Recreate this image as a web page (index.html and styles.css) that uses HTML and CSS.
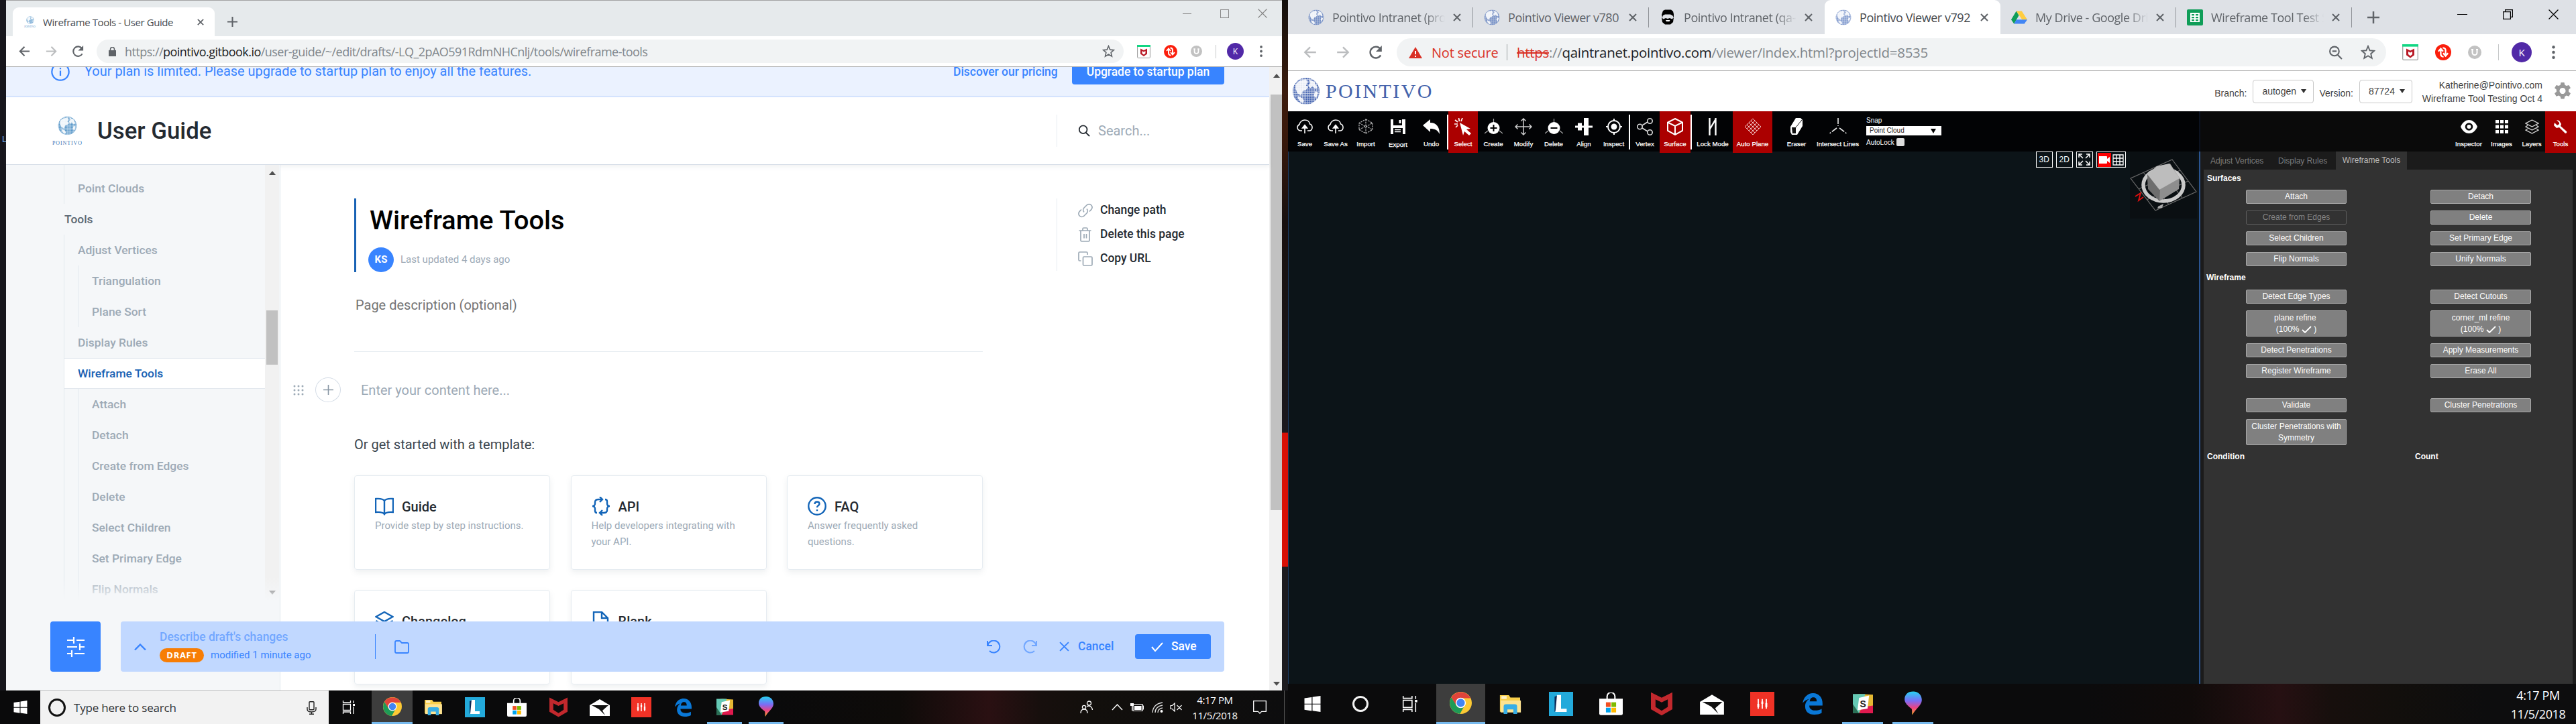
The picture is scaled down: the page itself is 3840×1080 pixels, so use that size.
FILE: index.html
```html
<!DOCTYPE html>
<html lang="en">
<head>
<meta charset="utf-8">
<title>Wireframe Tools - User Guide</title>
<link rel="stylesheet" href="styles.css">
</head>
<body>
<svg class="defs" aria-hidden="true">
  <defs>
    <clipPath id="disc"><circle cx="20" cy="20" r="19"/></clipPath>
    <symbol id="globe" viewBox="0 0 40 40">
      <circle cx="20" cy="20" r="19" fill="currentColor" opacity=".22"/>
      <path clip-path="url(#disc)" d="M0 2h40M0 4.500h40M0 7h40M0 9.500h40M0 12h40M0 14.500h40M0 17h40M0 19.500h40M0 22h40M0 24.500h40M0 27h40M0 29.500h40M0 32h40M0 34.500h40M0 37h40" stroke="currentColor" stroke-width="1.800" stroke-dasharray="1.800 .7"/>
      <path d="M5 10l6-5 9-2 2 4-2 5 3 2-3 4-5 2-2 6-5-3-3-6zM24 3l8 4 4 8-3 2-4-4-3 3-3-4 3-4zM9 27l6 3 2 4-2 3c-4-2-6-5-7-8zM33 20l4 2-3 8-3-4z" fill="#fff" opacity=".88"/>
    </symbol>
    <symbol id="back" viewBox="0 0 20 20"><path d="M18 10H3M10 3l-7 7 7 7" fill="none" stroke="currentColor" stroke-width="2.200"/></symbol>
    <symbol id="reload" viewBox="0 0 20 20"><path d="M16.500 14A7.600 7.600 0 1 1 16 5.500" fill="none" stroke="currentColor" stroke-width="2.200"/><path d="M18 1v8h-8z" fill="currentColor"/></symbol>
    <symbol id="x" viewBox="0 0 12 12"><path d="M1 1l10 10M11 1L1 11" stroke="currentColor" stroke-width="2"/></symbol>
    <symbol id="thinx" viewBox="0 0 14 14"><path d="M.5.5l13 13M13.500.5l-13 13" stroke="currentColor" stroke-width="1.200"/></symbol>
    <symbol id="plus" viewBox="0 0 16 16"><path d="M8 0v16M0 8h16" stroke="currentColor" stroke-width="2.200"/></symbol>
    <symbol id="star" viewBox="0 0 20 20"><path d="M10 1.800l2.400 5.700 6 .5-4.600 4 1.400 6L10 14.800 4.800 18l1.400-6-4.600-4 6-.5z" fill="none" stroke="currentColor" stroke-width="1.700"/></symbol>
    <symbol id="shield" viewBox="0 0 20 20"><rect x=".6" y=".6" width="18.800" height="18.800" rx="1" fill="#fff" stroke="#999"/><path d="M0 0h20v3H0z" fill="#12d683"/><path d="M5 5.500l5 2.500 5-2.500v8l-5 3.500-5-3.500zM7.500 9v3.500l2.500 2 2.500-2V9L10 10.500z" fill="#b81a26" fill-rule="evenodd"/></symbol>
    <symbol id="sync" viewBox="0 0 20 20"><circle cx="10" cy="10" r="10" fill="#fb1e0c"/><path d="M10.500 15.500C7.500 15.500 7 14 7 12V7M4 9l3-3.500L10 9M9.500 4.500C12.500 4.500 13 6 13 8v5M10 11l3 3.500 3-3.500" fill="none" stroke="#fff" stroke-width="1.900"/></symbol>
    <symbol id="ublock" viewBox="0 0 20 20"><circle cx="10" cy="10" r="10" fill="#c2c2c2"/><path d="M6.500 5.500v5a3.500 3.500 0 0 0 7 0v-5M5 6h3M12 6h3" fill="none" stroke="#fff" stroke-width="2"/></symbol>
    <symbol id="dotsv" viewBox="0 0 4 18"><g fill="#5f6368"><circle cx="2" cy="2" r="2"/><circle cx="2" cy="9" r="2"/><circle cx="2" cy="16" r="2"/></g></symbol>
    <symbol id="win" viewBox="0 0 20 20"><path d="M0 3l9-1.300v8H0zM10 1.500L20 0v9.700H10zM0 10.700h9v8L0 17.300zM10 10.700h10V20l-10-1.500z" fill="#fff"/></symbol>
    <symbol id="taskview" viewBox="0 0 20 20"><path d="M1 0v3h11V0M1 20v-3h11v3M1 5.500h11v9H1zM16.500 0v4M16.500 9v11" fill="none" stroke="#fff" stroke-width="1.300"/><path d="M15.500 5h3v3h-3z" fill="#fff"/></symbol>
    <symbol id="chrome" viewBox="0 0 28 28"><circle cx="14" cy="14" r="14" fill="#fcc934"/><path d="M2 7a14 14 0 0 1 24 0l.5 1H14l-6 9z" fill="#e0443a"/><path d="M2 7a14 14 0 0 0 11 21l6-11-10 1z" fill="#1e9b57"/><circle cx="14" cy="14" r="6.500" fill="#fff"/><circle cx="14" cy="14" r="5.200" fill="#4285f4"/></symbol>
    <symbol id="explorer" viewBox="0 0 28 26"><path d="M0 1h12l2 3h13v19H0z" fill="#f9cf4b"/><path d="M1 8h27v16H1z" fill="#fee391"/><path d="M2 2h7v4H2z" fill="#fff" opacity=".7"/><path d="M5 26V16a3 3 0 0 1 3-3h12a3 3 0 0 1 3 3v10h-5v-6h-8v6z" fill="#38aee6"/></symbol>
    <symbol id="lync" viewBox="0 0 30 30"><path d="M0 0h30v30H0z" fill="#23aadb"/><path d="M7 25V6l5-2v14z" fill="#0c2956"/><path d="M10 4h5v17h7v4H8z" fill="#fff"/></symbol>
    <symbol id="store" viewBox="0 0 30 30"><path d="M10 9V5a5 5 0 0 1 10 0v4" fill="none" stroke="#fff" stroke-width="1.800"/><path d="M0 8h30v19q0 2-2 2H2q-2 0-2-2z" fill="#fff"/><path d="M8.500 12.500h6v6h-6z" fill="#f25022"/><path d="M15.500 12.500h6v6h-6z" fill="#7fba00"/><path d="M8.500 19.500h6v6h-6z" fill="#00a4ef"/><path d="M15.500 19.500h6v6h-6z" fill="#ffb900"/></symbol>
    <symbol id="mcafee" viewBox="0 0 28 30"><path d="M0 0l14 7L28 0v22l-14 8-14-8zM6 9v10l8 5 8-5V9l-8 4z" fill="#c2282d" fill-rule="evenodd"/></symbol>
    <symbol id="mail" viewBox="0 0 30 26"><path d="M0 10L15 1l15 9v16H0z" fill="#fff"/><path d="M3 10h25l-9 8 4 7-9-9z" fill="#111"/></symbol>
    <symbol id="redapp" viewBox="0 0 30 30"><path d="M0 0h30v30H0z" fill="#f03226"/><path d="M10 9v12M15 9v12M20 9v12" stroke="#fff" stroke-width="1.500"/><path d="M8.800 15h2.400v4H8.800zM13.800 12h2.400v3h-2.400zM18.800 14h2.400v5h-2.400z" fill="#fff"/></symbol>
    <symbol id="edge" viewBox="0 0 24 26"><path d="M0 12C1 5 6 0 12.500 0 20 0 24 6 24 12v3H8c0 4 3 6 7 6 3 0 6-1 8-2v5c-3 1.500-5 2-9 2C7 26 3 22 3 16c0-4 2-7 5-9-4 1-6 3-8 5zM8.500 10H17c0-3-1-5-4-5s-4 2-4.500 5z" fill="#0a78d7"/></symbol>
    <symbol id="slack" viewBox="0 0 26 26"><path d="M0 2l9-1 17 1v23H0z" fill="#e5b833"/><path d="M0 1h16L8 26H0z" fill="#65c9b5"/><path d="M0 14l8 12H0z" fill="#2a6f55"/><path d="M8 26l4-8 14-2v10z" fill="#e01a4f"/><path d="M8 6l13-3-2 17-13 2z" fill="#fff"/><text x="9" y="18" class="slack-s">S</text></symbol>
    <linearGradient id="pg" x1="0" y1="0" x2="0" y2="1"><stop offset="0" stop-color="#25d3f2"/><stop offset=".4" stop-color="#7b6cf5"/><stop offset=".7" stop-color="#ee4380"/><stop offset="1" stop-color="#fbb52d"/></linearGradient>
    <symbol id="paint" viewBox="0 0 24 30"><path d="M12 0c7 0 11 5 11 11 0 7-9 12-12 19-1-2 0-5-1-8C6 19 1 15 1 10 1 4 5 0 12 0z" fill="url(#pg)"/></symbol>
    <symbol id="cloud" viewBox="0 0 24 22"><path d="M8 17H5.500A4.800 4.800 0 0 1 4 7.800C4.500 4 8 1 12 1s7 2.500 7.500 6c5 1.500 4.500 9 0 10H16" fill="none" stroke="#fff" stroke-width="1.500"/><path d="M12 21V11M8.500 13L12 8.500l3.500 4.500z" fill="#fff" stroke="#fff" stroke-width="1.600"/></symbol>
    <symbol id="mag" viewBox="0 0 20 20"><circle cx="8.500" cy="8" r="6.500" fill="none" stroke="currentColor" stroke-width="2"/><path d="M13 13l6 6" stroke="currentColor" stroke-width="2.200"/></symbol>
  </defs>
</svg>

<div class="desktop">
  <!-- left monitor -->
  <section class="screen screen-l">
    <div class="workarea">
      <div class="wall"><i class="sliver">L</i></div>
      <div class="win-l">
        <div class="tabs-l">
          <div class="tab-l">
            <span class="fav-l"><svg width="12" height="12"><use href="#globe"/></svg><b>POINTIVO</b></span>
            <span class="tt">Wireframe Tools - User Guide</span>
            <svg class="close" width="10" height="10"><use href="#x"/></svg>
          </div>
          <svg class="newtab" width="15" height="15"><use href="#plus"/></svg>
          <div class="caps-l">
            <i class="min"></i><i class="max"></i><svg width="14" height="14"><use href="#thinx"/></svg>
          </div>
        </div>
        <div class="nav-l">
          <svg width="19" height="19"><use href="#back"/></svg>
          <svg class="fwd" width="19" height="19"><use href="#back"/></svg>
          <svg width="19" height="19"><use href="#reload"/></svg>
          <div class="omni-l">
            <svg width="11" height="14" viewBox="0 0 11 14"><path d="M0 5h11v9H0z" fill="#5f6368"/><path d="M2.500 6V3.500a3 3 0 0 1 6 0V6" fill="none" stroke="#5f6368" stroke-width="1.600"/></svg>
            <span class="url">https://<b>pointivo.gitbook.io</b>/user-guide/~/edit/drafts/-LQ_2pAO591RdmNHCnlj/tools/wireframe-tools</span>
            <svg class="star" width="19" height="19"><use href="#star"/></svg>
          </div>
          <div class="ext-l">
            <svg width="20" height="20"><use href="#shield"/></svg>
            <svg width="20" height="20"><use href="#sync"/></svg>
            <svg width="17" height="17"><use href="#ublock"/></svg>
            <i class="vsep"></i>
            <span class="av-l">K</span>
            <svg width="4" height="17"><use href="#dotsv"/></svg>
          </div>
        </div>
        <div class="view-l">
          <div class="site">
            <div class="banner">
              <svg width="28" height="28" viewBox="0 0 28 28"><circle cx="14" cy="14" r="12.700" fill="none" stroke="#3884ff" stroke-width="2.200"/><path d="M14 12.500V20M14 8v2.200" stroke="#3884ff" stroke-width="2.200"/></svg>
              <span class="msg">Your plan is limited. Please upgrade to startup plan to enjoy all the features.</span>
              <span class="disc">Discover our pricing</span>
              <span class="upg">Upgrade to startup plan</span>
            </div>
            <header class="sitehead">
              <div class="logo-l"><svg width="29" height="29"><use href="#globe"/></svg><b>POINTIVO</b></div>
              <h1>User Guide</h1>
              <div class="search">
                <svg width="18" height="18"><use href="#mag"/></svg><span>Search...</span>
              </div>
            </header>
            <div class="cols">
              <aside>
                <nav class="toc">
                  <ul class="lv1"><li>Point Clouds</li></ul>
                  <div class="sec">Tools</div>
                  <ul class="lv1">
                    <li>Adjust Vertices</li>
                    <li class="sub"><ul class="lv2"><li>Triangulation</li><li>Plane Sort</li></ul></li>
                    <li>Display Rules</li>
                    <li class="on">Wireframe Tools</li>
                    <li class="sub"><ul class="lv2"><li>Attach</li><li>Detach</li><li>Create from Edges</li><li>Delete</li><li>Select Children</li><li>Set Primary Edge</li><li>Flip Normals</li></ul></li>
                  </ul>
                </nav>
                <div class="sb-in"><i class="up"></i><i class="thumb"></i><i class="down"></i></div>
                <div class="fade"></div>
              </aside>
              <main>
                <div class="page">
                  <div class="titleblock">
                    <h2>Wireframe Tools</h2>
                    <div class="by"><span class="ks">KS</span><span>Last updated 4 days ago</span></div>
                  </div>
                  <p class="desc">Page description (optional)</p>
                  <div class="entry">
                    <svg width="16" height="16" viewBox="0 0 16 16"><g fill="#9daab6"><circle cx="2" cy="2" r="1.500"/><circle cx="8" cy="2" r="1.500"/><circle cx="14" cy="2" r="1.500"/><circle cx="2" cy="8" r="1.500"/><circle cx="8" cy="8" r="1.500"/><circle cx="14" cy="8" r="1.500"/><circle cx="2" cy="14" r="1.500"/><circle cx="8" cy="14" r="1.500"/><circle cx="14" cy="14" r="1.500"/></g></svg>
                    <span class="addc"><svg width="15" height="15" viewBox="0 0 16 16"><path d="M8 0v16M0 8h16" stroke="#8896a4" stroke-width="1.700"/></svg></span>
                    <span>Enter your content here...</span>
                  </div>
                  <p class="or">Or get started with a template:</p>
                  <div class="cards">
                    <div class="card"><h3><svg width="28" height="28" viewBox="0 0 28 28"><path d="M14 6c-2-3-7-3.500-13-3v20c6-.5 11 0 13 3 2-3 7-3.500 13-3V3c-6-.5-11 0-13 3zv20" class="ci"/></svg><span>Guide</span></h3><p>Provide step by step instructions.</p></div>
                    <div class="card"><h3><svg width="28" height="28" viewBox="0 0 28 28"><path d="M16 4H10Q5 4 5 8v2q0 4-4 4 4 0 4 4v3q0 3 3 3M12 0l4 4-4 4M12 24h6q5 0 5-4v-2q0-4 4-4-4 0-4-4V7q0-3-3-3M16 20l-4 4 4 4" class="ci"/></svg><span>API</span></h3><p>Help developers integrating with your API.</p></div>
                    <div class="card"><h3><svg width="28" height="28" viewBox="0 0 28 28"><circle cx="14" cy="14" r="12.700" class="ci"/><path d="M10.500 11q0-3.500 3.500-3.500t3.500 3.200c0 2.300-3.500 2.500-3.500 5.300M14 19v2.300" class="ci"/></svg><span>FAQ</span></h3><p>Answer frequently asked questions.</p></div>
                    <div class="card"><h3><svg width="28" height="28" viewBox="0 0 28 28"><path d="M14 1l12.500 7L14 15 1.500 8zM1.500 14L14 21l12.500-7" class="ci"/></svg><span>Changelog</span></h3></div>
                    <div class="card"><h3><svg width="28" height="28" viewBox="0 0 28 28"><path d="M3 1h12l9 9v17H3zM15 1v9h9" class="ci"/></svg><span>Blank</span></h3></div>
                  </div>
                </div>
                <ul class="acts">
                  <li><svg width="22" height="22" viewBox="0 0 22 22"><path d="M9 13.500a4.800 4.800 0 0 1 0-6.500l4-4a4.700 4.700 0 0 1 6.700 6.700L17 12.500M13 8.500a4.800 4.800 0 0 1 0 6.500l-4 4a4.700 4.700 0 0 1-6.700-6.700L5 9.500" class="ai"/></svg>Change path</li>
                  <li><svg width="22" height="22" viewBox="0 0 22 22"><path d="M1.500 5h18M4 5v14.500q0 1.500 1.500 1.500h10q1.500 0 1.500-1.500V5M7 5V2.500Q7 1 8.500 1h4Q14 1 14 2.500V5M9 10v6.500M12.500 10v6.500" class="ai"/></svg>Delete this page</li>
                  <li><svg width="22" height="22" viewBox="0 0 22 22"><rect x="7.500" y="8" width="13.500" height="13" rx="1.500" class="ai"/><path d="M4.500 14H2.500Q1 14 1 12.500v-10Q1 1 2.500 1h10Q14 1 14 2.500V5" class="ai"/></svg>Copy URL</li>
                </ul>
              </main>
            </div>
            <div class="draft">
              <div class="dbtn"><svg width="26" height="30" viewBox="0 0 26 30"><path d="M0 5h10M14 5h12M0 15h15M19 15h7M0 25h7M11 25h15M10 0v10M19 10v10M7 20v10" stroke="#fff" stroke-width="2.200" fill="none"/></svg></div>
              <div class="dbar">
                <svg width="18" height="10" viewBox="0 0 18 10"><path d="M1 9.500l8-8 8 8" fill="none" stroke="#3884ff" stroke-width="2.400"/></svg>
                <div class="dtxt"><div class="d1">Describe draft's changes</div><div class="d2"><b>DRAFT</b><span>modified 1 minute ago</span></div></div>
                <div class="dfold"><svg width="22" height="20" viewBox="0 0 22 20"><path d="M1 3q0-2 2-2h5l3 3h8q2 0 2 2v11q0 2-2 2H3q-2 0-2-2z" fill="none" stroke="#3884ff" stroke-width="1.800"/></svg></div>
                <div class="dact">
                  <svg width="22" height="20" viewBox="0 0 22 20"><path d="M1 1v7h7M1.500 7.500A9 9 0 1 1 4 16" fill="none" stroke="#3884ff" stroke-width="2"/></svg>
                  <svg class="redo" width="22" height="20" viewBox="0 0 22 20"><path d="M21 1v7h-7M20.500 7.500A9 9 0 1 0 18 16" fill="none" stroke="#72a7ff" stroke-width="2"/></svg>
                  <svg width="15" height="15" viewBox="0 0 14 14"><path d="M1 1l12 12M13 1L1 13" stroke="#3884ff" stroke-width="1.800"/></svg>
                  <span class="cancel">Cancel</span>
                  <span class="save"><svg width="18" height="14" viewBox="0 0 18 14"><path d="M1 7l5 6L17 1" fill="none" stroke="#fff" stroke-width="2"/></svg>Save</span>
                </div>
              </div>
            </div>
          </div>
          <div class="sb-out"><i class="up"></i><i class="thumb"></i><i class="down"></i></div>
        </div>
      </div>
      <div class="gutter"></div>
    </div>
    <footer class="task-l">
      <div class="start"><svg width="21" height="20"><use href="#win"/></svg></div>
      <div class="tsearch"><i class="ring"></i><span>Type here to search</span>
        <svg width="15" height="20" viewBox="0 0 15 20"><rect x="4" y=".7" width="7" height="12" rx="1" fill="none" stroke="#222" stroke-width="1.400"/><path d="M1 9v3q0 4 6.500 4t6.500-4V9M7.500 16v4M4 19.300h7" fill="none" stroke="#222" stroke-width="1.400"/></svg></div>
      <div class="apps-l">
        <span><svg width="21" height="20"><use href="#taskview"/></svg></span>
        <span class="cur"><svg width="28" height="28"><use href="#chrome"/></svg></span>
        <span><svg width="28" height="24"><use href="#explorer"/></svg></span>
        <span><svg width="30" height="30"><use href="#lync"/></svg></span>
        <span><svg width="29" height="29"><use href="#store"/></svg></span>
        <span><svg width="27" height="30"><use href="#mcafee"/></svg></span>
        <span><svg width="30" height="26"><use href="#mail"/></svg></span>
        <span><svg width="30" height="30"><use href="#redapp"/></svg></span>
        <span><svg width="25" height="27"><use href="#edge"/></svg></span>
        <span class="open"><svg width="25" height="26"><use href="#slack"/></svg></span>
        <span class="open"><svg width="24" height="30"><use href="#paint"/></svg></span>
      </div>
      <div class="tray">
        <svg width="20" height="20" viewBox="0 0 20 20"><g fill="none" stroke="#fff" stroke-width="1.300"><circle cx="6" cy="10" r="2.600"/><path d="M1 19q0-6 5-6t5 6"/><circle cx="13.500" cy="4" r="3"/><path d="M10 9q3-2 6 0 2 1.500 2.500 5"/></g></svg>
        <svg width="17" height="10" viewBox="0 0 17 10"><path d="M1 9l7.500-8L16 9" fill="none" stroke="#fff" stroke-width="1.400"/></svg>
        <svg width="20" height="14" viewBox="0 0 20 14"><path d="M4 2.500h14v10H4zM18 5h1.500v5H18" fill="none" stroke="#fff" stroke-width="1.200"/><path d="M6 5h10.500v6H6zM0 1h5v4H3v7H2V5H0z" fill="#fff"/></svg>
        <svg width="18" height="16" viewBox="0 0 18 16"><g fill="none" stroke="#ddd" stroke-width="1.300"><path d="M1 16Q2 3 16 1"/><path d="M5 16Q5 7 16 5"/><path d="M9 16q0-6 7-7"/></g><circle cx="14.500" cy="14" r="2" fill="#fff"/></svg>
        <svg width="19" height="14" viewBox="0 0 19 14"><path d="M1 4.500h2.500L7 1v12L3.500 9.500H1zM10.500 4l7 7M17.500 4l-7 7" fill="none" stroke="#fff" stroke-width="1.200"/></svg>
        <div class="clock-l"><span>4:17 PM</span><span>11/5/2018</span></div>
        <svg width="20" height="20" viewBox="0 0 20 20"><path d="M.7.7h18.600v15.600h-6.600L10 19l-2.700-2.700H.7z" fill="none" stroke="#fff" stroke-width="1.300"/></svg>
      </div>
    </footer>
  </section>

  <!-- right monitor -->
  <section class="screen screen-r">
    <div class="tabs-r">
      <div class="tab"><svg width="24" height="24"><use href="#globe"/></svg><span class="cut">Pointivo Intranet (prod)</span><svg class="close" width="12" height="12"><use href="#x"/></svg></div>
      <div class="tab"><svg width="24" height="24"><use href="#globe"/></svg><span>Pointivo Viewer v780</span><svg class="close" width="12" height="12"><use href="#x"/></svg></div>
      <div class="tab nosep"><svg width="24" height="24" viewBox="0 0 24 24"><path d="M5 2l3-1.500h9L20 3l1 4v5l-2-3-3-1.500H8L5 9l-1 3-1-4z" fill="#000"/><path d="M3 12l2.500 2.500L9 13l3 1 3-1 3.500 1.500L21 12l-1 7-4 3.500h-8L4 19z" fill="#000"/><path d="M9 16h6.500l-1 2h-4.500z" fill="#fff"/></svg><span class="cut">Pointivo Intranet (qa-in)</span><svg class="close" width="12" height="12"><use href="#x"/></svg></div>
      <div class="tab active"><svg width="24" height="24"><use href="#globe"/></svg><span>Pointivo Viewer v792</span><svg class="close" width="12" height="12"><use href="#x"/></svg></div>
      <div class="tab"><svg width="25" height="22" viewBox="0 0 25 22"><path d="M8 1L0 14.500 4.500 21 12 8z" fill="#0f9d58"/><path d="M8 1h8.500L25 14.500h-8z" fill="#ffcd40"/><path d="M8 14.500h17L20.500 21h-16z" fill="#4285f4"/></svg><span class="cut">My Drive - Google Drive</span><svg class="close" width="12" height="12"><use href="#x"/></svg></div>
      <div class="tab"><svg width="24" height="24" viewBox="0 0 24 24"><rect width="24" height="24" rx="2" fill="#0f9d58"/><path d="M5 5h14v14H5z" fill="#fff"/><path d="M7 7h4v2.300H7zM13 7h4v2.300h-4zM7 11h4v2.300H7zM13 11h4v2.300h-4zM7 15h4v2.300H7zM13 15h4v2.300h-4z" fill="#0f9d58"/></svg><span class="cut">Wireframe Tool Test Scr</span><svg class="close" width="12" height="12"><use href="#x"/></svg></div>
      <svg class="newtab" width="18" height="18"><use href="#plus"/></svg>
      <div class="caps-r"><i class="min"></i><svg width="15" height="15" viewBox="0 0 15 15"><path d="M.6 3.600h10.800v10.800H.6zM3.600 3.600V.6h10.800v10.800h-3" fill="none" stroke="#000" stroke-width="1.200"/></svg><svg width="15" height="15"><use href="#thinx"/></svg></div>
    </div>
    <div class="nav-r">
      <svg class="fwd b" width="22" height="22"><use href="#back"/></svg>
      <svg class="fwd" width="22" height="22"><use href="#back"/></svg>
      <svg width="22" height="22"><use href="#reload"/></svg>
      <div class="omni-r">
        <svg width="20" height="17" viewBox="0 0 20 17"><path d="M10 0l10 17H0z" fill="#d93025"/><path d="M10 6v5M10 13v2" stroke="#fff" stroke-width="2"/></svg>
        <span class="ns">Not secure</span><i></i>
        <span class="url"><s>https</s>://<b>qaintranet.pointivo.com</b>/viewer/index.html?projectId=8535</span>
        <svg class="zoomi" width="21" height="21" viewBox="0 0 20 20"><circle cx="8.500" cy="8" r="6.500" fill="none" stroke="#5f6368" stroke-width="2"/><path d="M13 13l6 6M5.500 8h6" stroke="#5f6368" stroke-width="2"/></svg>
        <svg class="star" width="22" height="22"><use href="#star"/></svg>
      </div>
      <div class="ext-r">
        <svg width="24" height="24"><use href="#shield"/></svg>
        <svg width="24" height="24"><use href="#sync"/></svg>
        <svg width="20" height="20"><use href="#ublock"/></svg>
        <i class="vsep"></i>
        <span class="av-r">K</span>
        <svg width="5" height="20"><use href="#dotsv"/></svg>
      </div>
    </div>
    <div class="apphead">
      <svg width="42" height="42"><use href="#globe"/></svg>
      <span class="brand">POINTIVO</span>
      <div class="hctl">
        <label>Branch:</label><span class="dd d-a">autogen</span>
        <label>Version:</label><span class="dd d-b">87724</span>
        <div class="who"><span>Katherine@Pointivo.com</span><span class="proj">Wireframe Tool Testing Oct 4</span></div>
        <svg width="26" height="26" viewBox="0 0 26 26"><path d="M10.500 0h5l.8 3.700 2.500 1.400 3.600-1.200 2.500 4.400-2.800 2.500v3l2.800 2.500-2.500 4.400-3.600-1.200-2.500 1.400-.8 3.700h-5l-.8-3.700-2.500-1.400-3.600 1.200-2.500-4.400 2.800-2.500v-3L1.100 8.300l2.500-4.400 3.600 1.200 2.500-1.400zM13 8a4.500 4.500 0 1 0 .01 0z" fill="#999" fill-rule="evenodd"/></svg>
      </div>
    </div>
    <div class="viewer">
      <div class="stage">
        <div class="tools">
          <div class="tl"><svg width="24" height="22"><use href="#cloud"/></svg><span>Save</span></div>
          <div class="tl"><svg width="24" height="22"><use href="#cloud"/></svg><span>Save As</span></div>
          <div class="tl"><svg width="22" height="23" viewBox="0 0 22 23"><path d="M11 1l10 5.500v10L11 22 1 16.500v-10zM1 6.500L11 12l10-5.500M11 12v10M1 16.500L11 11l10 5.500M11 1v10" fill="none" stroke="#bbb" stroke-width="1.200" stroke-dasharray="2.500 1.300"/></svg><span>Import</span></div>
          <div class="tl low"><svg width="22" height="22" viewBox="0 0 22 22"><path d="M0 0h4v9h13V0h5v22H0z" fill="#fff"/><path d="M12.500 1h3v5h-3z" fill="#fff"/><path d="M4 13h14v9H4z" fill="#020305"/><path d="M6 15.500h9M6 18.500h9" stroke="#fff" stroke-width="1.500"/></svg><span>Export</span></div>
          <div class="tl"><svg width="26" height="22" viewBox="0 0 26 22"><path d="M0 9l11-9v5c9 0 14 6 14 17-3-6-7-8-14-8v5z" fill="#fff"/></svg><span>Undo</span></div>
          <i></i>
          <div class="tl red"><svg width="26" height="26" viewBox="0 0 26 26"><path d="M8 7l16 9-6 1 7 6-3 3-7-6-2 6z" fill="#fff"/><path d="M6.500 0l1 5M12 0l-2 5M1 3l4 3M0 9h5M2 14l3-3" stroke="#fff" stroke-width="1.700"/></svg><span>Select</span></div>
          <div class="tl"><svg width="27" height="24" viewBox="0 0 27 24"><path d="M13.500 0v8M5 18l-5 4M22 18l5 4" stroke="#aaa" stroke-width="1.200"/><circle cx="13.500" cy="14" r="9" fill="#fff"/><path d="M8.500 14h10M13.500 9v10" stroke="#000" stroke-width="2"/></svg><span>Create</span></div>
          <div class="tl"><svg width="26" height="26" viewBox="0 0 26 26"><path d="M13 1v24M1 13h24M9.500 4.500L13 1l3.500 3.500M9.500 21.500L13 25l3.500-3.500M4.500 9.500L1 13l3.500 3.500M21.500 9.500L25 13l-3.500 3.500" fill="none" stroke="#ccc" stroke-width="1.500"/></svg><span>Modify</span></div>
          <div class="tl"><svg width="27" height="24" viewBox="0 0 27 24"><path d="M13.500 0v8M5 18l-5 4M22 18l5 4" stroke="#aaa" stroke-width="1.200"/><circle cx="13.500" cy="14" r="9" fill="#fff"/><path d="M8.500 14h10" stroke="#000" stroke-width="2"/></svg><span>Delete</span></div>
          <div class="tl"><svg width="26" height="26" viewBox="0 0 26 26"><path d="M0 11.500h26v3H0zM4 7.500h6v11H4zM13 0h7v26h-7z" fill="#fff"/></svg><span>Align</span></div>
          <div class="tl"><svg width="24" height="24" viewBox="0 0 24 24"><circle cx="12" cy="12" r="9" fill="none" stroke="#fff" stroke-width="2"/><circle cx="12" cy="12" r="4.500" fill="#fff"/><path d="M12 0v3M12 21v3M0 12h3M21 12h3" stroke="#fff" stroke-width="2"/></svg><span>Inspect</span></div>
          <i></i>
          <div class="tl"><svg width="24" height="26" viewBox="0 0 24 26"><g fill="none" stroke="#ddd" stroke-width="1.600"><circle cx="4.500" cy="13" r="3.700"/><circle cx="19.500" cy="4.500" r="3.700"/><circle cx="19.500" cy="21.500" r="3.700"/><path d="M8 11l8-5M8 15l8 5"/></g></svg><span>Vertex</span></div>
          <div class="tl red"><svg width="24" height="26" viewBox="0 0 24 26"><path d="M12 1l11 5.500v12.500L12 25 1 19V6.500zM1 6.500L12 12l11-5.500M12 12v13" fill="none" stroke="#fff" stroke-width="2"/></svg><span>Surface</span></div>
          <i></i>
          <div class="tl"><svg width="12" height="26" viewBox="0 0 12 26"><path d="M1.500 0v26M10.500 0v26M1.500 17l9-15" stroke="#fff" stroke-width="2.400"/></svg><span>Lock Mode</span></div>
          <div class="tl red"><svg width="26" height="26" viewBox="0 0 26 26"><path d="M13 1l12 12-12 12L1 13zM10 4l12 12M7 7l12 12M4 10l12 12M16 4L4 16M19 7L7 19M22 10L10 22" fill="none" stroke="#f3c9c9" stroke-width="1"/></svg><span>Auto Plane</span></div>
          <b></b>
          <div class="tl"><svg width="20" height="26" viewBox="0 0 20 26"><path d="M9 0h7l3 3v9l-8 13H3l-2-4v-8z" fill="#fff"/><path d="M3 14h6v9H4z" fill="#111"/><path d="M9 14l9-11" stroke="#111" stroke-width="1"/></svg><span>Eraser</span></div>
          <div class="tl"><svg width="28" height="26" viewBox="0 0 28 26"><path d="M14 0v12M12 15L0 24M16 15l12 9" stroke="#eee" stroke-width="1.600" stroke-dasharray="9 2 2 2"/></svg><span>Intersect Lines</span></div>
          <div class="snap"><span>Snap</span><div class="sel">Point Cloud<em></em></div><div class="al"><span>AutoLock</span><u></u></div></div>
        </div>
        <div class="canvas">
          <div class="vbtns">
            <span>3D</span><span>2D</span>
            <span><svg width="18" height="18" viewBox="0 0 18 18"><path d="M1 6V1h5M12 1h5v5M17 12v5h-5M6 17H1v-5M1 1l6 6M17 1l-6 6M17 17l-6-6M1 17l6-6" fill="none" stroke="#fff" stroke-width="1.500"/></svg></span>
            <span class="cam"><svg width="41" height="21" viewBox="0 0 41 21"><path d="M0 0h20v21H0z" fill="#fd0000"/><path d="M2 5h11q1 0 1 1v3l4-3v9l-4-3v3q0 1-1 1H2z" fill="#fff"/><path d="M23 3h15v15H23zM28 3v15M33 3v15M23 8h15M23 13h15" fill="none" stroke="#fff" stroke-width="1.300"/></svg></span>
          </div>
          <div class="cube"><svg width="100" height="100" viewBox="0 0 100 100">
            <path d="M63 12l36 48-61 28L1 40zM42 23l36 46M20 31l38 48M13 56l62-28M25 72l62-28" fill="none" stroke="#6c6c6c" stroke-width="1.200"/>
            <ellipse cx="50" cy="50" rx="30" ry="24" fill="none" stroke="#c9c9c9" stroke-width="5.500"/>
            <path d="M26 34l16-12 18-4 14 22-1 16-29 18-17-22z" fill="#8e8e8e"/><path d="M26 34l1 22 17 18 1-17z" fill="#6d6d6d"/><path d="M26 34l14-12 19-4 15 22-30 17z" fill="#bdbdbd"/><path d="M42 82l8-4-2 6-7 1z" fill="#aaa"/>
            <path d="M8 67l8-5-3 11 7-5" fill="none" stroke="#e01010" stroke-width="1.800"/></svg></div>
        </div>
      </div>
      <div class="side">
        <div class="stools">
          <div class="tl"><svg width="25" height="20" viewBox="0 0 25 20"><path d="M0 10C3 3 8 0 12.500 0S22 3 25 10c-3 7-8 10-12.500 10S3 17 0 10z" fill="#fff"/><circle cx="12.500" cy="10" r="5.800" fill="#0a0a0a"/><circle cx="12.500" cy="10" r="3" fill="#fff"/></svg><span>Inspector</span></div>
          <div class="tl"><svg width="19" height="20" viewBox="0 0 19 20"><path d="M0 0h5v5H0zM7 0h5v5H7zM14 0h5v5h-5zM0 7.500h5v5H0zM7 7.500h5v5H7zM14 7.500h5v5h-5zM0 15h5v5H0zM7 15h5v5H7zM14 15h5v5h-5z" fill="#fff"/></svg><span>Images</span></div>
          <div class="tl"><svg width="21" height="22" viewBox="0 0 21 22"><path d="M10.500 1L20 6l-9.500 5L1 6zM4 9l-3 2 9.500 5 9.500-5-3-2M4 14l-3 2 9.500 5 9.500-5-3-2" fill="none" stroke="#ddd" stroke-width="1.300"/></svg><span>Layers</span></div>
          <div class="tl red"><svg width="20" height="20" viewBox="0 0 20 20"><path d="M4 0l4 1 3 5-1 3 9 8q1 3-2 3L8 11l-4 1-4-4 1-4 4 4 3-2V4z" fill="#fff"/></svg><span>Tools</span></div>
        </div>
        <div class="ptabs"><span>Adjust Vertices</span><span>Display Rules</span><span class="on">Wireframe Tools</span></div>
        <div class="panel">
          <h4>Surfaces</h4>
          <div class="grid">
            <button>Attach</button><button>Detach</button>
            <button class="off">Create from Edges</button><button>Delete</button>
            <button>Select Children</button><button>Set Primary Edge</button>
            <button>Flip Normals</button><button>Unify Normals</button>
          </div>
          <h4 class="h2nd">Wireframe</h4>
          <div class="grid">
            <button>Detect Edge Types</button><button>Detect Cutouts</button>
            <button class="two">plane refine&nbsp;<br>(100% <svg width="15" height="11" viewBox="0 0 15 11"><path d="M1 6l4 4 9-9" fill="none" stroke="#fff" stroke-width="1.800"/></svg> )</button><button class="two">corner_ml refine<br>(100% <svg width="15" height="11" viewBox="0 0 15 11"><path d="M1 6l4 4 9-9" fill="none" stroke="#fff" stroke-width="1.800"/></svg> )</button>
            <button>Detect Penetrations</button><button>Apply Measurements</button>
            <button>Register Wireframe</button><button>Erase All</button>
          </div>
          <div class="grid g3">
            <button>Validate</button><button>Cluster Penetrations</button>
            <button class="two">Cluster Penetrations with Symmetry</button>
          </div>
          <div class="cc"><b>Condition</b><b>Count</b></div>
        </div>
      </div>
    </div>
    <footer class="task-r">
      <div class="apps-r">
        <span><svg width="25" height="24"><use href="#win"/></svg></span>
        <span><i class="ring"></i></span>
        <span><svg width="25" height="24"><use href="#taskview"/></svg></span>
        <span class="cur"><svg width="33" height="33"><use href="#chrome"/></svg></span>
        <span><svg width="33" height="29"><use href="#explorer"/></svg></span>
        <span><svg width="36" height="36"><use href="#lync"/></svg></span>
        <span><svg width="35" height="35"><use href="#store"/></svg></span>
        <span><svg width="32" height="36"><use href="#mcafee"/></svg></span>
        <span><svg width="36" height="31"><use href="#mail"/></svg></span>
        <span><svg width="36" height="36"><use href="#redapp"/></svg></span>
        <span><svg width="30" height="32"><use href="#edge"/></svg></span>
        <span class="open"><svg width="30" height="30"><use href="#slack"/></svg></span>
        <span class="open"><svg width="28" height="36"><use href="#paint"/></svg></span>
      </div>
      <div class="clock-r"><span>4:17 PM</span><span>11/5/2018</span></div>
    </footer>
  </section>
</div>
</body>
</html>
```
FILE: styles.css
```css
* { box-sizing: border-box; }
body { margin: 0; width: 3840px; height: 1080px; overflow: hidden; background: #0d0d0e; font-family: Roboto, "Liberation Sans", sans-serif; line-height: 1; }
h1, h2, h3, h4, p, ul { margin: 0; padding: 0; font-weight: 500; list-style: none; }
svg { display: block; flex: none; }
i, b, em, u, s { font-style: normal; }
.defs { position: absolute; width: 0; height: 0; }
.slack-s { font: bold 12px "Liberation Sans", sans-serif; fill: #222; }

.desktop { display: flex; height: 1080px; }
.screen { width: 1920px; height: 1080px; display: flex; flex-direction: column; flex: none; overflow: hidden; }

/* left monitor */
.workarea { display: flex; height: 1030px; }
.wall { width: 9px; background: #17161c; padding-top: 201px; overflow: hidden; }
.sliver { display: block; font-size: 13px; color: #6fb3f0; padding-left: 3px; }
.gutter { width: 9px; background: linear-gradient(#120f0c, #3c1c0e 140px, #3a190b 200px, #17100f 330px, #1b191e 645px, #d81006 646px, #d81006 845px, #1d1c20 846px); }
.win-l { width: 1902px; display: flex; flex-direction: column; border-top: 1px solid #a3a3a3; }
.tabs-l { height: 53px; background: #e6eaec; display: flex; align-items: flex-end; padding-left: 10px; }
.tab-l { width: 301px; height: 43px; background: #fff; border-radius: 9px 9px 0 0; display: flex; align-items: center; padding-left: 16px; font: 15px "Open Sans", "Noto Sans", sans-serif; color: #45494d; }
.fav-l { width: 19px; color: #4a90c8; display: flex; flex-direction: column; align-items: center; gap: 2px; }
.fav-l b { font: 3.500px "Liberation Serif", serif; }
.tab-l .tt { width: 230px; margin-left: 10px; white-space: nowrap; letter-spacing: -.42px; }
.close { color: #5f6368; }
.newtab { color: #5f6368; }
.tabs-l .newtab { margin: 0 0 14px 19px; }
.caps-l { margin-left: auto; margin-right: 22px; align-self: flex-start; padding-top: 12px; display: flex; gap: 43px; align-items: center; color: #888; }
.min { width: 13px; height: 1px; background: #888; }
.max { width: 13px; height: 13px; border: 1px solid #888; }
.nav-l { height: 46px; background: #fff; border-bottom: 1px solid #a9a9a9; display: flex; align-items: center; padding-left: 18px; color: #5f6368; }
.nav-l > svg { margin-right: 21px; }
.nav-l .fwd { color: #bbbdbf; transform: scaleX(-1); }
.omni-l { width: 1531px; height: 35px; margin-left: -3px; border-radius: 18px; background: #f1f3f4; display: flex; align-items: center; padding: 0 13px 0 18px; }
.url { font: 18px "Open Sans", "Noto Sans", sans-serif; color: #80868b; white-space: nowrap; }
.url b { font-weight: 400; color: #202124; }
.omni-l .url { margin-left: 13px; letter-spacing: -.54px; }
.star { margin-left: auto; color: #5f6368; }
.ext-l { display: flex; align-items: center; padding-left: 20px; gap: 20px; }
.vsep { width: 1px; height: 20px; background: #c6c8ca; }
.av-l, .av-r { width: 25px; height: 25px; border-radius: 50%; background: #5129a7; color: #fff; font: 12px/25px "Open Sans", sans-serif; text-align: center; margin-left: -4px; }
.ext-l > svg:last-child { margin-left: 4px; }
.view-l { display: flex; height: 930px; }
.site { width: 1883px; background: #fff; position: relative; }
.banner { height: 45px; background: #ebf2ff; border-bottom: 1px solid #bcd5ff; display: flex; align-items: flex-start; overflow: hidden; color: #3884ff; font-size: 19.950px; }
.banner > svg { margin: -7px 0 0 67px; }
.msg { margin: -3px 0 0 22px; width: 1295px; white-space: nowrap; }
.disc { margin-top: -1px; width: 177px; font-size: 17.450px; font-weight: 500; white-space: nowrap; }
.upg { width: 227px; height: 38px; margin-top: -12px; border-radius: 4px; background: #3884ff; color: #fff; font-size: 17.450px; font-weight: 500; line-height: 38px; text-align: center; white-space: nowrap; }
.sitehead { height: 101px; border-bottom: 1px solid #d4dce6; display: flex; align-items: center; box-shadow: 0 3px 6px rgba(116,129,141,.1); position: relative; }
.logo-l { width: 47px; margin-left: 68px; color: #4a8ec4; display: flex; flex-direction: column; align-items: center; gap: 7px; }
.logo-l b { font: 8px "Liberation Serif", serif; letter-spacing: .9px; color: #4478b5; }
h1 { margin-left: 21px; font-size: 34.800px; color: #242a31; white-space: nowrap; }
.search { margin-left: auto; width: 317px; height: 48px; border-left: 1px solid #e6ecf1; display: flex; align-items: center; gap: 12px; padding-left: 31px; font-size: 20px; color: #9daab6; }
.search svg { color: #242a31; }
.cols { display: flex; height: 784px; overflow: hidden; }
aside { width: 409px; background: #f5f7f9; border-right: 1px solid #e2e8ee; display: flex; position: relative; }
.toc { width: 386px; padding: 0 0 0 86px; height: 650px; overflow: hidden; font-size: 17.400px; font-weight: 500; color: #9daab6; }
.toc li, .sec { height: 46px; line-height: 46px; white-space: nowrap; }
.lv1 { border-left: 1px solid #e2e8ee; }
.lv1:first-child { padding-top: 12px; }
.lv1 > li { padding-left: 20px; }
.lv1 > .sub { padding-left: 20px; height: auto; }
.lv2 { border-left: 1px solid #e2e8ee; padding-left: 20px; }
.sec { color: #5c6975; padding-left: 1px; }
.lv1 > .on { background: #fff; color: #1862b4; border: solid #e2e8ee; border-width: 1px 0; line-height: 44px; }
.sb-in { width: 21px; height: 650px; background: #f1f1f1; padding: 9px 2px; display: flex; flex-direction: column; align-items: center; }
.up, .down { border: 5px solid transparent; border-width: 0 5px 6px; border-bottom-color: #505050; width: 0; }
.down { border-width: 6px 5px 0; border-top-color: #505050; margin-top: auto; }
.thumb { width: 17px; background: #c1c1c1; }
.sb-in .thumb { margin-top: 202px; height: 81px; }
.fade { position: absolute; left: 0; right: 0; top: 615px; height: 36px; background: linear-gradient(rgba(245,247,249,0), #f5f7f9); }
main { flex: 1; display: flex; padding: 50px 0 0 110px; }
.page { width: 937px; }
.titleblock { height: 110px; border-left: 3px solid #1862b4; padding: 13px 0 0 20px; }
h2 { font-size: 39.700px; color: #000; white-space: nowrap; height: 60px; }
.by { display: flex; align-items: center; gap: 10px; font-size: 15px; color: #9daab6; margin-left: -2px; }
.ks { width: 38px; height: 37px; border-radius: 50%; background: #3884ff; color: #fff; font-weight: 700; font-size: 15px; line-height: 37px; text-align: center; }
.desc { height: 119px; padding: 39px 0 0 2px; font-size: 20px; font-weight: 400; color: #747474; border-bottom: 1px solid #e6ecf1; }
.entry { display: flex; align-items: center; margin: 38px 0 0 -91px; font-size: 20px; color: #9daab6; }
.addc { width: 38px; height: 37px; border: 1px solid #d4dce6; border-radius: 50%; margin: 0 30px 0 17px; display: grid; place-items: center; }
.or { margin-top: 53px; height: 56px; font-size: 20px; font-weight: 400; color: #3b454e; }
.cards { display: grid; grid-template-columns: repeat(3, 292px); gap: 30px 30.500px; }
.card { height: 141px; border: 1px solid #e6ecf1; border-radius: 4px; box-shadow: 0 4px 8px rgba(116,129,141,.12); padding: 31px 30px; }
.card h3 { display: flex; gap: 12px; align-items: center; font-size: 20px; color: #242a31; }
.card h3 span { padding-top: 2px; }
.card p { font-size: 15px; line-height: 24px; font-weight: 400; color: #9daab6; margin-top: 3px; }
.ci { fill: none; stroke: #1365b8; stroke-width: 2.400; }
.ai { fill: none; stroke: #9daab6; stroke-width: 1.700; }
.acts { margin-left: 110px; height: 108px; width: 300px; border-left: 1px solid #e6ecf1; padding: 0 0 0 31px; }
.acts li { display: flex; align-items: center; gap: 11px; height: 36px; font-size: 17.450px; font-weight: 500; color: #242a31; }
.draft { position: absolute; left: 66px; top: 827px; display: flex; gap: 30px; }
.dbtn { width: 75px; height: 75px; border-radius: 4px; background: #3884ff; display: grid; place-items: center; }
.dbar { width: 1645px; height: 75px; border-radius: 4px; background: #c1d8ff; color: #3884ff; display: flex; align-items: center; padding-left: 20px; }
.dtxt { margin-left: 20px; width: 321px; }
.d1 { font-size: 17.450px; font-weight: 500; color: #72a7ff; height: 25px; }
.d2 { display: flex; align-items: center; gap: 10px; font-size: 15px; }
.d2 b { width: 66px; height: 21px; border-radius: 11px; background: #f77d05; color: #fff; font: 700 13px/21px "Open Sans", sans-serif; letter-spacing: .7px; text-align: center; }
.dfold { height: 37px; border-left: 1px solid #3884ff; display: flex; align-items: center; padding-left: 28px; }
.dact { margin-left: auto; margin-right: 20px; display: flex; align-items: center; font-size: 17.450px; font-weight: 500; }
.redo { margin: 0 33px 0 31px; }
.cancel { width: 85px; margin-left: 13px; }
.save { width: 113px; height: 37px; border-radius: 4px; background: #3884ff; color: #fff; display: flex; align-items: center; gap: 12px; padding-left: 24px; }
.sb-out { width: 19px; background: #f1f1f1; display: flex; flex-direction: column; align-items: center; padding: 10px 0 7px 2px; }
.sb-out .thumb { margin-top: 25px; height: 620px; }

.task-l { height: 50px; width: 1915px; background: linear-gradient(90deg, #0a0a0b 60%, #0e0b09 70%, #2a1012 77%, #170f0d 81%, #120f0c 85%, #0d0d0e); border-right: 1px solid #555; display: flex; }
.start { width: 60px; display: grid; place-items: center; }
.tsearch { width: 430px; background: #f2f2f2; border-top: 1px solid #bbb; display: flex; align-items: center; font: 17px "Open Sans", sans-serif; color: #333; padding-left: 12px; letter-spacing: -.2px; white-space: nowrap; }
.tsearch > span { width: 347px; margin-left: 12px; }
.ring { width: 26px; height: 27px; border: 3.500px solid #111; border-radius: 50%; }
.apps-l { display: grid; grid-template-columns: 64px 61px; grid-auto-columns: 62px; grid-auto-flow: column; }
.apps-l > span, .apps-r > span { display: grid; place-items: center; }
.apps-l > span:first-child { padding-right: 4px; }
.cur { background: #3d3d3d; border-bottom: 3px solid #76b9ed; }
.open { border-bottom: 3px solid #76b9ed; margin: 0 5px; }
.tray { margin-left: auto; display: flex; align-items: center; padding-right: 26px; }
.tray > svg:nth-child(1) { margin-right: 27px; }
.tray > svg:nth-child(2) { margin-right: 11px; }
.tray > svg:nth-child(3) { margin-right: 12px; }
.tray > svg:nth-child(4) { margin-right: 9px; }
.clock-l { width: 96px; display: flex; flex-direction: column; align-items: center; gap: 1px; margin: 0 9px 0 0; font: 15px/22px "Open Sans", sans-serif; color: #fff; letter-spacing: -.4px; }

/* right monitor */
.screen-r .tabs-r { height: 51px; background: #dee1e6; display: flex; padding-left: 14px; }
.tab { width: 262px; height: 51px; display: flex; align-items: center; padding-left: 16px; color: #5f6368; font: 18px "Open Sans", "Noto Sans", sans-serif; letter-spacing: -.45px; }
.tab > svg:first-child { width: 24px; color: #5f7fc0; }
.tab > span { width: 168px; margin: 0 12px; white-space: nowrap; overflow: hidden; }
.tab .cut { -webkit-mask-image: linear-gradient(90deg, #000 82%, transparent); mask-image: linear-gradient(90deg, #000 82%, transparent); }
.tab::after { content: ""; width: 1px; height: 30px; background: #8f9398; margin-left: auto; }
.nosep::after, .active::after { display: none; }
.tab.active { background: #fff; color: #45494d; border-radius: 9px 9px 0 0; }
.tabs-r .newtab { margin: 17px 0 0 23px; }
.caps-r { margin-left: auto; margin-right: 26px; display: flex; align-items: center; height: 42px; gap: 53px; }
.caps-r .min { width: 15px; background: #000; }
.nav-r { height: 55px; background: #fff; border-bottom: 1px solid #a9a9a9; display: flex; align-items: center; padding-left: 22px; color: #5f6368; }
.nav-r > svg { margin-right: 27px; }
.nav-r .fwd { color: #bbbdbf; transform: scaleX(-1); }
.nav-r .fwd.b { transform: none; }
.omni-r { width: 1475px; height: 42px; margin-left: -7px; border-radius: 21px; background: #f1f3f4; display: flex; align-items: center; padding: 0 16px 0 18px; white-space: nowrap; }
.ns { font: 20px "Open Sans", sans-serif; color: #d93025; margin-left: 14px; width: 112px; letter-spacing: -.2px; }
.omni-r i { width: 1px; height: 24px; background: #9a9da0; margin-right: 14px; }
.omni-r .url { font-size: 20.500px; letter-spacing: -.3px; }
.url s { color: #d93025; }
.zoomi { margin-left: auto; }
.omni-r .star { margin-left: 27px; }
.ext-r { display: flex; align-items: center; gap: 25px; padding-left: 24px; }
.ext-r .vsep { height: 24px; }
.av-r { width: 30px; height: 30px; font-size: 15px; line-height: 30px; margin-left: -6px; }
.ext-r > svg:last-child { margin-left: 5px; }
.apphead { height: 60px; background: #fff; display: flex; align-items: center; padding-left: 6px; color: #3f5fae; font-family: "Liberation Sans", Arial, sans-serif; }
.brand { margin-left: 8px; font: 30px "Liberation Serif", serif; color: #4463ab; letter-spacing: 2.400px; }
.hctl { margin-left: auto; display: flex; align-items: center; color: #444; font-size: 14px; padding-right: 7px; white-space: nowrap; }
.hctl label { padding-top: 5px; }
.dd { height: 35px; border: 1px solid #c8c8c8; border-radius: 4px; margin: 0 8px 0 9px; display: flex; align-items: center; justify-content: space-between; padding: 0 10px 0 13px; }
.dd::after { content: ""; border: 4px solid transparent; border-width: 6px 4px 0; border-top-color: #333; }
.d-a { width: 91px; }
.d-b { width: 79px; }
.who { width: 194px; display: flex; flex-direction: column; gap: 6px; margin: 2px 17px 0 0; margin-left: 0; align-items: flex-end; }
.d-b { margin-right: 0; }
.viewer { height: 854px; display: flex; font-family: "Liberation Sans", Arial, sans-serif; }
.stage { width: 1358px; }
.tools { height: 60px; background: #020305; display: grid; grid-template-columns: 46px 46px 44px 52px 47px 2px 44px 46px 44px 46px 44px 45px 2px 44px 46px 3px 60px 59px 6px 60px 58px 200px; padding-left: 2px; }
.tools > i { background: #fff; margin: 5px 0; }
.tools > i:nth-of-type(3) { margin-right: 1px; }
.tl { display: grid; grid-template-rows: 41px 19px; justify-items: center; align-items: center; color: #fff; font-size: 9.700px; white-space: nowrap; padding-top: 2px; -webkit-text-stroke: .25px #fff; }
.tl > span { align-self: start; padding-top: 1px; }
.tl > svg { align-self: center; }
.low > span { padding-top: 2px; }
.red { background: #ab0000; }
.snap { padding: 9px 0 0 16px; color: #fff; font-size: 10px; display: flex; flex-direction: column; }
.sel { margin-top: 3px; width: 112px; height: 14px; background: #fff; color: #222; display: flex; align-items: center; justify-content: space-between; padding: 0 8px 0 5px; font-size: 10px; }
.sel em { border: 4px solid transparent; border-width: 7px 4px 0; border-top-color: #000; }
.al { display: flex; gap: 3px; align-items: flex-end; margin-top: 4px; }
.al u { width: 12px; height: 12px; background: #ddd; border-radius: 2px; }
.canvas { height: 794px; background: #0c1418; border-left: 1px solid #1d3c63; display: flex; justify-content: flex-end; }
.vbtns { display: flex; gap: 5.500px; padding-right: 6px; }
.vbtns > span { width: 24.500px; height: 24px; border: 1px solid #fff; color: #fff; font-size: 12px; display: grid; place-items: center; }
.vbtns > .cam { width: 44px; }
.cube { width: 100px; height: 100px; background: #0a0f12; margin-right: 3px; }
.side { width: 562px; background: #1b1b1b; border-left: 2px solid #2a5490; padding-right: 5px; }
.stools { height: 60px; background: #0a0a0a; display: grid; grid-template-columns: 48px 50px 40px 46px; justify-content: end; margin-right: -5px; margin-left: -2px; border-left: 2px solid #0b1220; }
.ptabs { height: 27px; display: flex; align-items: center; font-size: 12px; color: #7b7b7b; padding-left: 15px; white-space: nowrap; }
.ptabs > span { width: 101px; }
.ptabs > span:nth-child(2) { width: 86px; }
.ptabs > .on { width: 106px; height: 27px; background: #323232; color: #bbb; line-height: 26px; text-align: center; }
.panel { margin-left: 5px; height: 767px; background: #323232; color: #fff; padding: 6px 0 0 5px; font-size: 12px; }
.panel h4 { font-weight: 700; font-size: 12px; height: 24px; padding-top: 1px; }
.panel .h2nd { height: 26px; margin: 9px 0 0 -1px; padding-top: 2px; }
.grid { display: grid; grid-template-columns: 150px 150px; gap: 10px 125px; padding-left: 58px; }
.g3 { margin-top: 30px; }
.grid button { height: 21px; padding: 0; border: 1px solid #a8a8a8; border-radius: 2px; background: #808080; color: #fff; font: 12px/17px "Liberation Sans", Arial, sans-serif; }
.grid .two { height: 39px; }
.grid button svg { display: inline-block; vertical-align: -2px; }
.grid .off { background: #323232; border-color: #5c5c5c; color: #858585; }
.cc { display: flex; margin-top: 11px; }
.cc b { width: 310px; flex: none; }
.cc b + b { width: 200px; }
.task-r { height: 60px; background: linear-gradient(90deg, #0b0b0c 62%, #100b0a 70%, #261012 77%, #170f0d 81%, #120f0c 86%, #0d0d0e 93%); display: flex; justify-content: space-between; }
.apps-r { display: grid; grid-template-columns: 72px 72px 77px 73px; grid-auto-columns: 75px; grid-auto-flow: column; }
.apps-r .open { margin: 0 7px; }
.task-r .ring { width: 24px; height: 24px; border: 3px solid #f2f2f2; }
.clock-r { display: flex; flex-direction: column; align-items: center; width: 110px; padding: 3px 3px 0 0; font: 18px/28px "Open Sans", sans-serif; color: #fff; letter-spacing: -.4px; }
```
